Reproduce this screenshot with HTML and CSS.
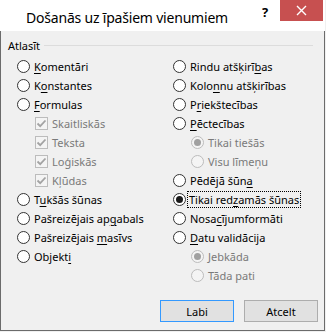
FILE: index.html
```html
<!DOCTYPE html>
<html lang="lv">
<head>
    <meta charset="UTF-8">
    <meta name="viewport" content="width=device-width, initial-scale=1.0">
    <title>Došanās uz īpašiem vienumiem</title>
    <link rel="stylesheet" href="styles.css">
</head>
<body>
    <div class="dialog">
        <!-- Virsraksta josla -->
        <div class="titlebar">
            <span class="title">Došanās uz īpašiem vienumiem</span>
            <span class="help">?</span>
            <span class="close">
                <svg width="11" height="11" viewBox="0 0 11 11">
                    <path d="M1 1 L10 10 M10 1 L1 10" stroke="#fff" stroke-width="1.4" fill="none"/>
                </svg>
            </span>
        </div>

        <div class="content">
            <div class="group">
                <div class="legend">
                    <span>Atlasīt</span>
                    <div class="rule"></div>
                </div>

                <div class="columns">
                    <div class="col">
                        <div class="row"><span class="radio"></span><span class="label"><u>K</u>omentāri</span></div>
                        <div class="row"><span class="radio"></span><span class="label">K<u>o</u>nstantes</span></div>
                        <div class="row"><span class="radio"></span><span class="label"><u>F</u>ormulas</span></div>
                        <div class="row sub disabled"><span class="check"><svg width="11" height="11" viewBox="0 0 11 11"><path d="M1.5 5.5 L4.2 8.2 L9.5 2.5" stroke="#a3a3a3" stroke-width="1.8" fill="none"/></svg></span><span class="label">Skaitliskās</span></div>
                        <div class="row sub disabled"><span class="check"><svg width="11" height="11" viewBox="0 0 11 11"><path d="M1.5 5.5 L4.2 8.2 L9.5 2.5" stroke="#a3a3a3" stroke-width="1.8" fill="none"/></svg></span><span class="label">Teksta</span></div>
                        <div class="row sub disabled"><span class="check"><svg width="11" height="11" viewBox="0 0 11 11"><path d="M1.5 5.5 L4.2 8.2 L9.5 2.5" stroke="#a3a3a3" stroke-width="1.8" fill="none"/></svg></span><span class="label">Loģiskās</span></div>
                        <div class="row sub disabled"><span class="check"><svg width="11" height="11" viewBox="0 0 11 11"><path d="M1.5 5.5 L4.2 8.2 L9.5 2.5" stroke="#a3a3a3" stroke-width="1.8" fill="none"/></svg></span><span class="label">Kļūdas</span></div>
                        <div class="row"><span class="radio"></span><span class="label">T<u>u</u>kšās šūnas</span></div>
                        <div class="row"><span class="radio"></span><span class="label">Pašreizējais ap<u>g</u>abals</span></div>
                        <div class="row"><span class="radio"></span><span class="label">Pašreizējais <u>m</u>asīvs</span></div>
                        <div class="row"><span class="radio"></span><span class="label">Objekt<u>i</u></span></div>
                    </div>

                    <div class="col">
                        <div class="row"><span class="radio"></span><span class="label">Rindu atšķirī<u>b</u>as</span></div>
                        <div class="row"><span class="radio"></span><span class="label">Kolo<u>n</u>nu atšķirības</span></div>
                        <div class="row"><span class="radio"></span><span class="label">P<u>r</u>iekštecības</span></div>
                        <div class="row"><span class="radio"></span><span class="label"><u>P</u>ēctecības</span></div>
                        <div class="row sub disabled"><span class="radio checked"></span><span class="label">Tikai tiešās</span></div>
                        <div class="row sub disabled"><span class="radio"></span><span class="label">Visu līmeņu</span></div>
                        <div class="row"><span class="radio"></span><span class="label">Pēdējā šūn<u>a</u></span></div>
                        <div class="row"><span class="radio checked"></span><span class="label focus">Tikai red<u>z</u>amās šūnas</span></div>
                        <div class="row"><span class="radio"></span><span class="label">Nosa<u>c</u>ījumformāti</span></div>
                        <div class="row"><span class="radio"></span><span class="label"><u>D</u>atu validācija</span></div>
                        <div class="row sub disabled"><span class="radio checked"></span><span class="label">Jebkāda</span></div>
                        <div class="row sub disabled"><span class="radio"></span><span class="label">Tāda pati</span></div>
                    </div>
                </div>
            </div>

            <div class="buttons">
                <button class="btn default">Labi</button>
                <button class="btn">Atcelt</button>
            </div>
        </div>
    </div>
</body>
</html>
```

FILE: styles.css
```css
* {
    margin: 0;
    padding: 0;
    box-sizing: border-box;
}
html, body {
    width: 326px;
    height: 332px;
    overflow: hidden;
    background-color: #f0f0f0;
    font-family: "Noto Sans", "Open Sans", sans-serif;
    font-size: 11px;
    color: #000;
}
.dialog {
    width: 325px;
    height: 331px;
    border-left: 1px solid #6b6b6b;
    border-right: 1px solid #6b6b6b;
    border-bottom: 1px solid #6b6b6b;
    background-color: #f0f0f0;
    display: flex;
    flex-direction: column;
}
.titlebar {
    height: 31px;
    background-color: #fff;
    display: flex;
    align-items: flex-start;
    margin: 0 -1px;
}
.title {
    font-size: 14px;
    letter-spacing: -0.2px;
    line-height: 17px;
    margin-top: 9px;
    margin-left: 26px;
    flex: 1;
    white-space: nowrap;
}
.help {
    font-weight: bold;
    font-size: 13px;
    line-height: 14px;
    margin-top: 5px;
    width: 16px;
    margin-right: 2px;
}
.close {
    width: 43px;
    height: 21px;
    margin-right: 2px;
    background-color: #c75050;
    display: flex;
    justify-content: center;
    align-items: center;
}
.close svg {
    display: block;
}
.content {
    flex: 1;
    padding: 7px 6px 8px 7px;
    display: flex;
    flex-direction: column;
}
.legend {
    display: flex;
    align-items: center;
    height: 14px;
    gap: 4px;
}
.rule {
    flex: 1;
    height: 1px;
    background-color: #dcdcdc;
    margin-right: 5px;
}
.columns {
    display: grid;
    grid-template-columns: 156px 1fr;
    margin-top: 5px;
    padding-left: 9px;
}
.row {
    height: 19px;
    display: flex;
    align-items: center;
    gap: 4px;
    white-space: nowrap;
}
.row.sub {
    padding-left: 18px;
}
.radio {
    width: 13px;
    height: 13px;
    border: 1px solid #333;
    border-radius: 50%;
    background-color: #fff;
    display: flex;
    justify-content: center;
    align-items: center;
    flex-shrink: 0;
}
.radio.checked::after {
    content: "";
    width: 7px;
    height: 7px;
    border-radius: 50%;
    background-color: #1a1a1a;
}
.disabled .radio {
    border-color: #bcbcbc;
    background-color: #f4f4f4;
}
.disabled .radio.checked::after {
    background-color: #a0a0a0;
}
.check {
    width: 13px;
    height: 13px;
    border: 1px solid #bcbcbc;
    background-color: #f4f4f4;
    flex-shrink: 0;
}
.check svg {
    display: block;
}
.disabled .label {
    color: #7a7a7a;
}
.label u {
    text-underline-offset: 2px;
}
.label.focus {
    outline: 1px dotted #000;
    padding: 0 1px;
    margin-left: -2px;
}
.buttons {
    margin-top: auto;
    display: flex;
    justify-content: flex-end;
    gap: 10px;
}
.btn {
    width: 74px;
    height: 22px;
    font-family: inherit;
    font-size: 11px;
    background-color: #e1e1e1;
    border: 1px solid #adadad;
    color: #000;
}
.btn.default {
    border-color: #3399ff;
}
```
